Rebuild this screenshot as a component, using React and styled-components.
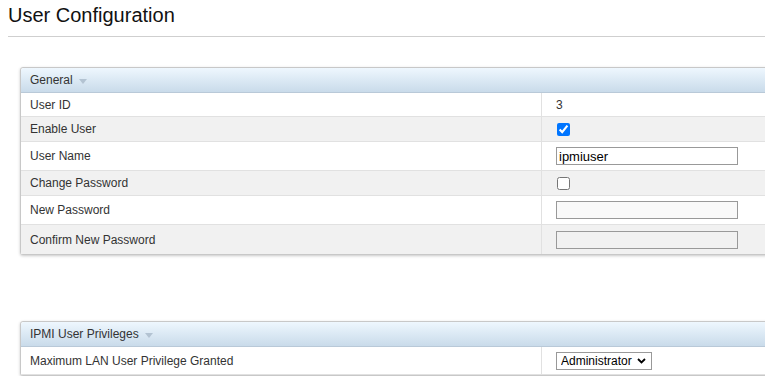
import React from 'react'
import styled, { createGlobalStyle } from 'styled-components'

const Global = createGlobalStyle`
html, body {
  margin: 0;
  padding: 0;
  overflow: hidden;
  background: #fff;
  font-family: Arial, "Liberation Sans", sans-serif;
  color: #333;
}
`

const Page = styled.div`
padding: 0 0 0 8px;
width: 1000px;
`

const Title = styled.h1`
margin: 0;
padding-top: 3px;
font-size: 20px;
font-weight: normal;
color: #111;
line-height: 24px;
height: 33px;
border-bottom: 1px solid #cfcfcf;
`

const Panel = styled.div`
margin: ${p => p.$top}px 0 0 12px;
width: 780px;
border: 1px solid #c8c8c8;
border-radius: 3px 0 0 3px;
box-shadow: 0 1px 3px rgba(0, 0, 0, 0.22);
background: #fff;
`

const PanelHeader = styled.div`
height: 24px;
display: flex;
align-items: center;
padding-left: 9px;
font-size: 12px;
color: #333;
background: linear-gradient(#eef7fe, #c9dbea);
border-bottom: 1px solid #b9c9d8;
border-radius: 3px 0 0 0;
`

const Arrow = styled.span`
display: inline-block;
margin-left: 6px;
margin-top: 2px;
width: 0;
height: 0;
border-left: 4px solid transparent;
border-right: 4px solid transparent;
border-top: 5px solid #b3c3d2;
`

const Row = styled.div`
display: grid;
grid-template-columns: 521px 1fr;
height: ${p => p.$h}px;
background: ${p => (p.$alt ? '#f1f1f1' : '#fff')};
border-bottom: ${p => (p.$last ? 'none' : '1px solid #e1e1e1')};
box-sizing: border-box;
`

const Label = styled.div`
display: flex;
align-items: center;
padding-left: 9px;
font-size: 12px;
border-right: 1px solid #e1e1e1;
`

const Value = styled.div`
display: flex;
align-items: center;
padding-left: 14px;
font-size: 12px;
`

const TextInput = styled.input`
box-sizing: border-box;
width: 182px;
height: 18px;
margin: 0;
padding: 0 2px;
border: 1px solid #999;
border-radius: 0;
font-family: Arial, "Liberation Sans", sans-serif;
font-size: 13px;
color: #000;
background: ${p => p.$bg || '#fff'};
outline: none;
`

const Check = styled.input`
margin: 0 0 0 1px;
width: 13px;
height: 13px;
`

const SelectBox = styled.div`
position: relative;
width: 96px;
height: 18px;
`

const Select = styled.select`
appearance: none;
box-sizing: border-box;
width: 100%;
height: 100%;
margin: 0;
padding: 0 0 0 4px;
border: 1px solid #999;
border-radius: 0;
background: #fff;
font-family: Arial, "Liberation Sans", sans-serif;
font-size: 12px;
color: #000;
`

const Chevron = styled.svg`
position: absolute;
right: 6px;
top: 6px;
pointer-events: none;
`

const rows = [
  { label: 'User ID', h: 24, value: <span>3</span> },
  { label: 'Enable User', h: 25, alt: true, value: <Check type="checkbox" defaultChecked /> },
  { label: 'User Name', h: 29, value: <TextInput defaultValue="ipmiuser" /> },
  { label: 'Change Password', h: 25, alt: true, value: <Check type="checkbox" /> },
  { label: 'New Password', h: 29, value: <TextInput type="password" $bg="#f9f9f9" /> },
  { label: 'Confirm New Password', h: 29, alt: true, value: <TextInput type="password" $bg="#f1f1f1" disabled /> },
]

export default function App() {
  return (
    <Page>
      <Global />
      <Title>User Configuration</Title>

      <Panel $top={30}>
        <PanelHeader>General<Arrow /></PanelHeader>
        {rows.map((r, i) => (
          <Row key={r.label} $h={r.h} $alt={r.alt} $last={i === rows.length - 1}>
            <Label>{r.label}</Label>
            <Value>{r.value}</Value>
          </Row>
        ))}
      </Panel>

      <Panel $top={66}>
        <PanelHeader>IPMI User Privileges<Arrow /></PanelHeader>
        <Row $h={28}>
          <Label>Maximum LAN User Privilege Granted</Label>
          <Value>
            <SelectBox>
              <Select defaultValue="admin">
                <option value="admin">Administrator</option>
                <option value="operator">Operator</option>
                <option value="user">User</option>
              </Select>
              <Chevron width="9" height="6" viewBox="0 0 9 6">
                <path d="M1 1 L4.5 4.5 L8 1" fill="none" stroke="#000" strokeWidth="1.8" />
              </Chevron>
            </SelectBox>
          </Value>
        </Row>
      </Panel>
    </Page>
  )
}
